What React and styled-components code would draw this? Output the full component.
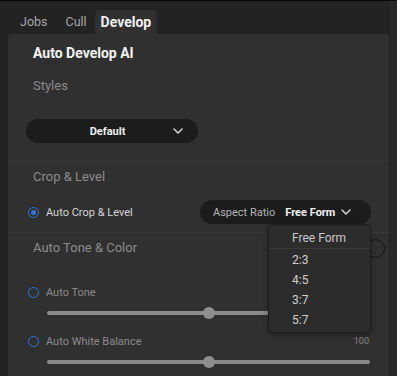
import React from "react";
import styled, { createGlobalStyle } from "styled-components";

const Global = createGlobalStyle`
  html, body { margin: 0; padding: 0; background: #232323; }
  body { font-family: Roboto, "Liberation Sans", sans-serif; -webkit-font-smoothing: antialiased; }
`;

const Screen = styled.div`
  width: 397px;
  height: 376px;
  box-sizing: border-box;
  border-top: 1px solid #0a0a0a;
  background: #232323;
  display: flex;
  overflow: hidden;
`;

const Main = styled.div`
  flex: 1;
  display: flex;
  flex-direction: column;
  padding: 0 1px 0 8px;
  min-width: 0;
`;

const Strip = styled.div`
  width: 7px;
  background: #282828;
`;

const TabBar = styled.div`
  height: 33px;
  display: flex;
  align-items: flex-end;
  padding-left: 6px;
`;

const Tab = styled.div`
  height: 24px;
  line-height: 24px;
  margin-left: ${(p) => p.$gap || 0}px;
  padding: 0 ${(p) => (p.$active ? 6 : 6)}px;
  border-radius: 5px 5px 0 0;
  font-size: ${(p) => (p.$active ? 14 : 12.5)}px;
  font-weight: ${(p) => (p.$active ? 700 : 400)};
  color: ${(p) => (p.$active ? "#f2f2f2" : "#a8a8a8")};
  background: ${(p) => (p.$active ? "#303030" : "transparent")};
`;

const Panel = styled.div`
  flex: 1;
  background: #303030;
  border-radius: 4px 4px 0 0;
  display: flex;
  flex-direction: column;
  position: relative;
`;

const Section = styled.div`
  display: flex;
  flex-direction: column;
  padding: ${(p) => p.$pad || "0"};
  border-bottom: ${(p) => (p.$divider ? "1px solid #393939" : "none")};
`;

const Title = styled.div`
  height: 20px;
  line-height: 20px;
  margin: ${(p) => p.$m || "0"};
  padding-left: 25px;
  font-size: 14px;
  font-weight: 700;
  color: #f4f4f4;
`;

const Heading = styled.div`
  height: 20px;
  line-height: 20px;
  margin: ${(p) => p.$m || "0"};
  padding-left: 25px;
  font-size: 13px;
  color: #8c8c8c;
  display: flex;
  align-items: center;
  justify-content: space-between;
`;

const Select = styled.div`
  margin: ${(p) => p.$m || "0"};
  margin-left: 18px;
  width: 172px;
  height: 24px;
  border-radius: 12px;
  background: #1c1c1c;
  display: flex;
  align-items: center;
  position: relative;
  color: #f0f0f0;
  font-size: 11px;
  font-weight: 700;
`;

const SelectText = styled.span`
  flex: 1;
  text-align: center;
  padding-left: 16px;
`;

const Chevron = styled.svg`
  width: 10px;
  height: 6px;
  margin: ${(p) => p.$m || "0 16px 0 0"};
  flex-shrink: 0;
`;

const OptionRow = styled.div`
  display: flex;
  align-items: center;
  justify-content: space-between;
  height: ${(p) => p.$h || 24}px;
  margin: ${(p) => p.$m || "0"};
  padding: 0 18px 0 20px;
`;

const RadioLabel = styled.label`
  display: flex;
  align-items: center;
  gap: 7px;
  font-size: 11px;
  color: ${(p) => (p.$on ? "#d4d4d4" : "#8c8c8c")};
`;

const Radio = styled.span`
  width: 9px;
  height: 9px;
  border-radius: 50%;
  border: 1.5px solid #2f78d6;
  display: flex;
  align-items: center;
  justify-content: center;
  &::after {
    content: "";
    width: 5px;
    height: 5px;
    border-radius: 50%;
    background: ${(p) => (p.$on ? "#2f78d6" : "transparent")};
  }
`;

const Pill = styled.div`
  width: 171px;
  height: 24px;
  border-radius: 12px;
  background: #1c1c1c;
  display: flex;
  align-items: center;
  box-sizing: border-box;
  padding-left: 13px;
  font-size: 11px;
`;

const PillLabel = styled.span`
  color: #b4b4b4;
  margin-right: 10px;
`;

const PillValue = styled.span`
  color: #f2f2f2;
  font-weight: 700;
  margin-right: 6px;
`;

const Toggle = styled.span`
  width: 17px;
  height: 17px;
  border-radius: 50%;
  border: 1.5px solid #141414;
  margin-right: 4px;
`;

const SliderRow = styled.div`
  display: flex;
  align-items: center;
  justify-content: space-between;
  height: 16px;
  margin: ${(p) => p.$m || "0"};
  padding: 0 20px 0 20px;
`;

const Value = styled.span`
  font-size: 9px;
  color: #8a8a8a;
`;

const Track = styled.div`
  height: 16px;
  margin: ${(p) => p.$m || "0"};
  margin-left: 39px;
  margin-right: 19px;
  position: relative;
  display: flex;
  align-items: center;
  &::before {
    content: "";
    flex: 1;
    height: 4px;
    border-radius: 2px;
    background: #8a8a8a;
  }
`;

const Thumb = styled.span`
  position: absolute;
  top: 2px;
  width: 12px;
  height: 12px;
  border-radius: 50%;
  background: #8f8f8f;
`;

const Menu = styled.div`
  position: absolute;
  left: 260px;
  top: 190px;
  width: 103px;
  box-sizing: border-box;
  background: #2c2c2c;
  border: 1px solid #1c1c1c;
  border-radius: 5px;
  box-shadow: 0 2px 6px rgba(0,0,0,0.35);
  padding-bottom: 3px;
`;

const MenuHead = styled.div`
  height: 23px;
  line-height: 26px;
  padding-left: 23px;
  font-size: 12px;
  color: #c8c8c8;
  border-bottom: 1px solid #3a3a3a;
`;

const MenuItem = styled.div`
  height: 20px;
  line-height: 22px;
  padding-left: 23px;
  font-size: 12px;
  color: #cfcfcf;
`;

const ChevronIcon = ({ m, color = "#e0e0e0" }) => (
  <Chevron $m={m} viewBox="0 0 10 6">
    <path d="M1 1 L5 5 L9 1" fill="none" stroke={color} strokeWidth="1.4" strokeLinecap="round" strokeLinejoin="round" />
  </Chevron>
);

export default function App() {
  return (
    <>
      <Global />
      <Screen>
        <Main>
          <TabBar>
            <Tab>Jobs</Tab>
            <Tab $gap={6}>Cull</Tab>
            <Tab $active $gap={2}>Develop</Tab>
          </TabBar>
          <Panel>
            <Section $divider $pad="0 0 18px 0">
              <Title $m="9px 0 0 0">Auto Develop AI</Title>
              <Heading $m="13px 0 0 0">Styles</Heading>
              <Select $m="23px 0 0 0">
                <SelectText>Default</SelectText>
                <ChevronIcon m="0 15px 0 0" />
              </Select>
            </Section>
            <Section $divider $pad="0 0 8px 0">
              <Heading $m="5px 0 0 0">Crop &amp; Level</Heading>
              <OptionRow $m="13px 0 0 0">
                <RadioLabel $on>
                  <Radio $on />
                  Auto Crop &amp; Level
                </RadioLabel>
                <Pill>
                  <PillLabel>Aspect Ratio</PillLabel>
                  <PillValue>Free Form</PillValue>
                  <ChevronIcon m="0" />
                </Pill>
              </OptionRow>
            </Section>
            <Section>
              <Heading $m="5px 0 0 0">
                Auto Tone &amp; Color
                <Toggle />
              </Heading>
              <OptionRow $h={20} $m="24px 0 0 0">
                <RadioLabel>
                  <Radio />
                  Auto Tone
                </RadioLabel>
              </OptionRow>
              <Track $m="3px 0 0 0">
                <Thumb style={{ left: 156 }} />
              </Track>
              <SliderRow $m="12px 0 0 0">
                <RadioLabel>
                  <Radio />
                  Auto White Balance
                </RadioLabel>
                <Value>100</Value>
              </SliderRow>
              <Track $m="5px 0 0 0">
                <Thumb style={{ left: 156 }} />
              </Track>
            </Section>
            <Menu>
              <MenuHead>Free Form</MenuHead>
              <MenuItem>2:3</MenuItem>
              <MenuItem>4:5</MenuItem>
              <MenuItem>3:7</MenuItem>
              <MenuItem>5:7</MenuItem>
            </Menu>
          </Panel>
        </Main>
        <Strip />
      </Screen>
    </>
  );
}
